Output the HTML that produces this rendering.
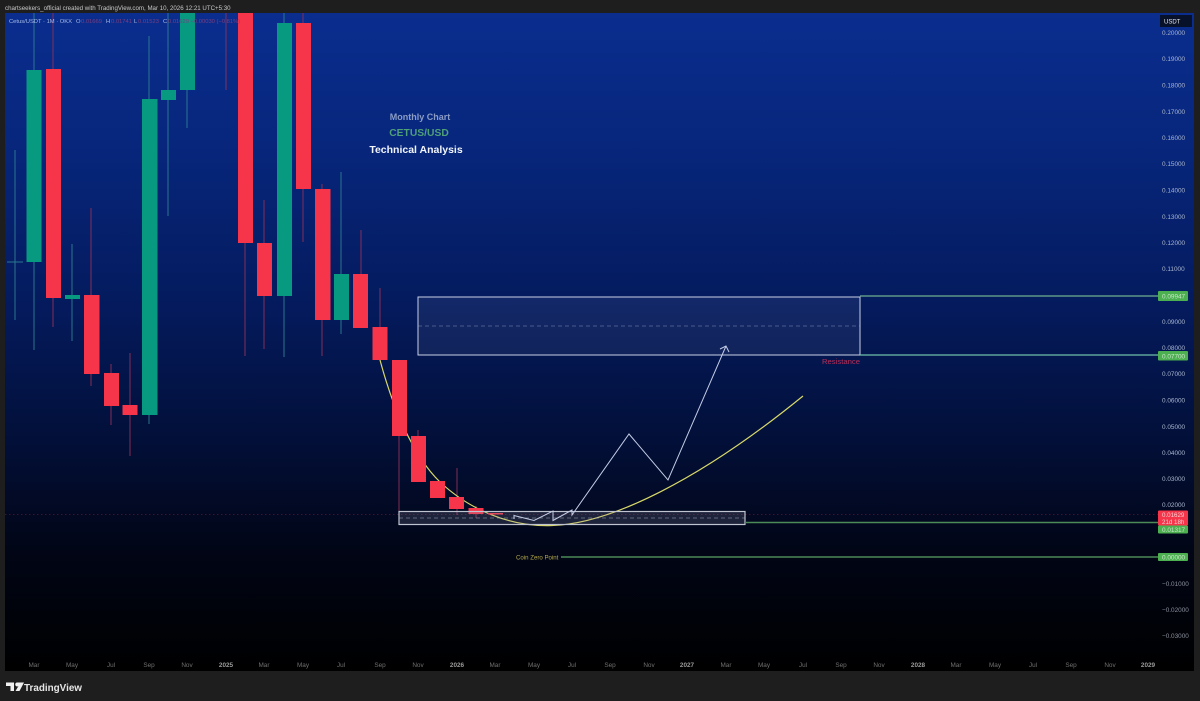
<!DOCTYPE html>
<html><head><meta charset="utf-8">
<style>
html,body{margin:0;padding:0;width:1200px;height:701px;overflow:hidden;background:#1e1e1e}
svg{display:block;font-family:"Liberation Sans",sans-serif;filter:blur(0.3px)}
</style></head><body>
<svg width="1200" height="701" viewBox="0 0 1200 701" xmlns="http://www.w3.org/2000/svg">
<defs>
<linearGradient id="bg" x1="0" y1="13" x2="0" y2="671" gradientUnits="userSpaceOnUse">
<stop offset="0" stop-color="#0a2d8e"/>
<stop offset="0.2" stop-color="#07267c"/>
<stop offset="0.45" stop-color="#041a5c"/>
<stop offset="0.65" stop-color="#020f38"/>
<stop offset="0.82" stop-color="#010515"/>
<stop offset="1" stop-color="#000000"/>
</linearGradient>
</defs>
<rect width="1200" height="701" fill="#1e1e1e"/>
<rect x="5" y="13" width="1189" height="658" fill="url(#bg)"/>

<text x="5" y="10" font-size="6.150" fill="#c8c8c8">chartseekers_official created with TradingView.com, Mar 10, 2026 12:21 UTC+5:30</text>

<!-- wicks green -->
<g stroke="#2f7f92" stroke-width="1" fill="none" opacity="0.9">
<path d="M15 150V320M7 262H23M34 13V350M72 244V341M149 36V424M168 13V216M187 13V128M284 13V357M341 172V334"/>
</g>
<!-- wicks red -->
<g stroke="#8a3058" stroke-width="1" fill="none" opacity="0.95">
<path d="M53 13V327M91 208V386M111 364V425M130 353V456M226 13V90M245 13V356M264 200V349M303 13V242M322 184V356M361 230V275M380 288V330M399 360V513M418 430V437M457 468V515M476 506V518"/>
</g>

<!-- curve (behind the candles) -->
<path d="M380 360C392 405 412 455 440 482C470 510 510 527 552 525.500C610 524 700 480 803 396" fill="none" stroke="#d8d868" stroke-width="1.200"/>

<!-- green bodies -->
<g fill="#089981">
<rect x="26.500" y="70" width="15" height="192"/>
<rect x="65" y="295" width="15" height="4"/>
<rect x="142" y="99" width="15.500" height="316"/>
<rect x="161" y="90" width="15" height="10"/>
<rect x="180" y="13" width="15" height="77"/>
<rect x="277" y="23" width="15" height="273"/>
<rect x="334" y="274" width="15" height="46"/>
</g>
<!-- red bodies -->
<g fill="#f6354a">
<rect x="46" y="69" width="15" height="229"/>
<rect x="84" y="295" width="15.500" height="79"/>
<rect x="104" y="373" width="15" height="33"/>
<rect x="122.500" y="405" width="15" height="10"/>
<rect x="238" y="13" width="15" height="230"/>
<rect x="257" y="243" width="15" height="53"/>
<rect x="296" y="23" width="15" height="166"/>
<rect x="315" y="189" width="15.500" height="131"/>
<rect x="353" y="274" width="15" height="54"/>
<rect x="372.500" y="327" width="15" height="33"/>
<rect x="392" y="360" width="15" height="76"/>
<rect x="411" y="436" width="15" height="46"/>
<rect x="430" y="481" width="15" height="17"/>
<rect x="449" y="497" width="15" height="12"/>
<rect x="468.500" y="508" width="15" height="6"/>
<rect x="488" y="513" width="15" height="1.500"/>
</g>

<!-- current price line -->
<path d="M5 514.500H1160" stroke="#f6354a" stroke-width="0.7" stroke-dasharray="1.500 2.500" opacity="0.35"/>

<!-- resistance box -->
<rect x="418" y="297" width="442" height="58" fill="#8f9fc8" fill-opacity="0.1" stroke="#c8d0e4" stroke-width="1"/>
<path d="M418 326H860" stroke="#aab4d0" stroke-width="0.7" stroke-dasharray="4 3" opacity="0.5"/>
<path d="M860 296H1160" stroke="#6fb08f" stroke-width="1.200"/>
<path d="M860 355H1160" stroke="#6fbfa8" stroke-width="1.200"/>
<text x="860" y="364" font-size="7.700" fill="#b92f57" text-anchor="end">Resistance</text>

<!-- support box -->
<rect x="399" y="511.500" width="346" height="13" fill="#8f93a8" fill-opacity="0.2" stroke="#c0c4d0" stroke-width="1.200"/>
<path d="M399 518H745" stroke="#b0b4c4" stroke-width="0.7" stroke-dasharray="4 3" opacity="0.6"/>
<path d="M745 522.500H1160" stroke="#4c8a58" stroke-width="1.400"/>
<path d="M561 557H1160" stroke="#4c8a58" stroke-width="1.400"/>
<text x="516" y="559.500" font-size="6.100" fill="#b5a94a">Coin Zero Point</text>

<!-- projection -->
<path d="M514 519V515.500L534 520.500L553 511V520.500L572 510V515L629 434L668 480L726 346" fill="none" stroke="#c4cce6" stroke-width="1"/>
<path d="M720 349L726 346L729 352" fill="none" stroke="#c4cce6" stroke-width="1"/>

<!-- text block -->
<text x="420" y="120" font-size="9" font-weight="bold" fill="#8a9cc4" text-anchor="middle">Monthly Chart</text>
<text x="419" y="136" font-size="10.300" font-weight="bold" fill="#4f9f78" text-anchor="middle">CETUS/USD</text>
<text x="416" y="153" font-size="10.500" font-weight="bold" fill="#f2f5fc" text-anchor="middle">Technical Analysis</text>

<!-- legend -->
<text x="9" y="23" font-size="5.800" fill="#a8bce8">Cetus/USDT · 1M · OKX</text>
<text x="76" y="23" font-size="5.800" fill="#a8bce8">O</text><text x="81" y="23" font-size="5.800" fill="#7a3f80">0.01669</text>
<text x="106" y="23" font-size="5.800" fill="#a8bce8">H</text><text x="111" y="23" font-size="5.800" fill="#7a3f80">0.01741</text>
<text x="134" y="23" font-size="5.800" fill="#a8bce8">L</text><text x="138" y="23" font-size="5.800" fill="#7a3f80">0.01523</text>
<text x="163" y="23" font-size="5.800" fill="#a8bce8">C</text><text x="168" y="23" font-size="5.800" fill="#7a3f80">0.01629 −0.00030 (−0.81%)</text>

<!-- price axis -->
<rect x="1160" y="15" width="32" height="12" fill="#07112a"/>
<text x="1164" y="23.500" font-size="6" fill="#e8e8e8">USDT</text>
<g font-size="6.400" fill="#a8b4cc">
<text x="1162" y="35" >0.20000</text>
<text x="1162" y="61">0.19000</text>
<text x="1162" y="87.500">0.18000</text>
<text x="1162" y="114">0.17000</text>
<text x="1162" y="140">0.16000</text>
<text x="1162" y="166">0.15000</text>
<text x="1162" y="192.500">0.14000</text>
<text x="1162" y="219">0.13000</text>
<text x="1162" y="245">0.12000</text>
<text x="1162" y="271">0.11000</text>
<text x="1162" y="324">0.09000</text>
<text x="1162" y="350">0.08000</text>
<text x="1162" y="376">0.07000</text>
<text x="1162" y="402.500">0.06000</text>
<text x="1162" y="429">0.05000</text>
<text x="1162" y="455">0.04000</text>
<text x="1162" y="481">0.03000</text>
<text x="1162" y="507">0.02000</text>
<text x="1162" y="586" fill="#8a8f9c">−0.01000</text>
<text x="1162" y="612" fill="#8a8f9c">−0.02000</text>
<text x="1162" y="638" fill="#8a8f9c">−0.03000</text>
</g>
<rect x="1158" y="291" width="30" height="10" rx="1" fill="#4caf50"/>
<text x="1162" y="298.500" font-size="6.400" fill="#c8e8c8">0.09947</text>
<rect x="1158" y="351" width="30" height="9.500" rx="1" fill="#4caf50"/>
<text x="1162" y="358.500" font-size="6.400" fill="#c8e8c8">0.07700</text>
<rect x="1158" y="510.500" width="30" height="15" rx="1" fill="#f6354a"/>
<text x="1162" y="517" font-size="6.200" fill="#f8d0d4">0.01629</text>
<text x="1162" y="524" font-size="6.200" fill="#f8d0d4">21d 18h</text>
<rect x="1158" y="525.500" width="30" height="8" rx="1" fill="#4caf50"/>
<text x="1162" y="532" font-size="6.400" fill="#c8e8c8">0.01317</text>
<rect x="1158" y="553" width="30" height="8" rx="1" fill="#4caf50"/>
<text x="1162" y="559.500" font-size="6.400" fill="#c8e8c8">0.00000</text>

<!-- time axis -->
<g font-size="6.400" fill="#6f6f6f" text-anchor="middle">
<text x="34" y="667">Mar</text><text x="72" y="667">May</text><text x="111" y="667">Jul</text>
<text x="149" y="667">Sep</text><text x="187" y="667">Nov</text>
<text x="226" y="667" font-weight="bold" fill="#9a9a9a">2025</text>
<text x="264" y="667">Mar</text><text x="303" y="667">May</text><text x="341" y="667">Jul</text>
<text x="380" y="667">Sep</text><text x="418" y="667">Nov</text>
<text x="457" y="667" font-weight="bold" fill="#9a9a9a">2026</text>
<text x="495" y="667">Mar</text><text x="534" y="667">May</text><text x="572" y="667">Jul</text>
<text x="610" y="667">Sep</text><text x="649" y="667">Nov</text>
<text x="687" y="667" font-weight="bold" fill="#9a9a9a">2027</text>
<text x="726" y="667">Mar</text><text x="764" y="667">May</text><text x="803" y="667">Jul</text>
<text x="841" y="667">Sep</text><text x="879" y="667">Nov</text>
<text x="918" y="667" font-weight="bold" fill="#9a9a9a">2028</text>
<text x="956" y="667">Mar</text><text x="995" y="667">May</text><text x="1033" y="667">Jul</text>
<text x="1071" y="667">Sep</text><text x="1110" y="667">Nov</text>
<text x="1148" y="667" font-weight="bold" fill="#9a9a9a">2029</text>
</g>

<!-- logo -->
<path d="M6 682.500H14V691H10.500V686H6ZM17.500 682.500H24L19.500 691H15.500L18.500 686A2 2 0 1 1 17.500 682.500Z" fill="#f0f0f0"/>
<text x="24" y="691" font-size="9.900" font-weight="bold" fill="#e6e6e6">TradingView</text>
</svg>
</body></html>
